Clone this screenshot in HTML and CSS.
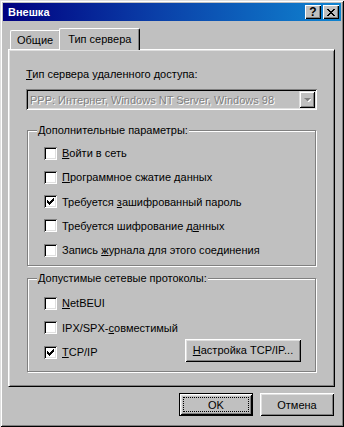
FILE: index.html
```html
<!DOCTYPE html>
<html lang="ru">
<head>
  <meta charset="UTF-8">
  <title>Внешка</title>
  <link rel="stylesheet" href="styles.css">
</head>
<body>
  <div class="window">
    <div class="titlebar">
      <span class="title">Внешка</span>
      <div class="title-buttons">
        <button class="tb-btn">?</button>
        <button class="tb-btn">
          <svg width="8" height="7" viewBox="0 0 8 7"><path d="M0 0h2v1h1v1h2v-1h1v-1h2v1h-1v1h-1v1h-1v1h1v1h1v1h1v1h-2v-1h-1v-1h-2v1h-1v1h-2v-1h1v-1h1v-1h1v-1h-1v-1h-1v-1h-1z" fill="#000"/></svg>
        </button>
      </div>
    </div>

    <div class="dialog-body">
      <div class="tabs">
        <div class="tab">Общие</div>
        <div class="tab active">Тип сервера</div>
      </div>

      <div class="panel">
        <div class="field-label"><u>Т</u>ип сервера удаленного доступа:</div>
        <div class="combo">
          <span class="combo-text">PPP: Интернет, Windows NT Server, Windows 98</span>
          <span class="combo-btn">
            <svg width="7" height="4" viewBox="0 0 7 4"><path d="M1 1h7l-3.5 3.5z" fill="#fff"/><path d="M0 0h7l-3.5 3.5z" fill="#808080"/></svg>
          </span>
        </div>

        <div class="group first">
          <span class="group-title">Дополнительные параметры:</span>
          <div class="options">
            <label class="option"><span class="check"></span><span><u>В</u>ойти в сеть</span></label>
            <label class="option"><span class="check"></span><span><u>П</u>рограммное сжатие данных</span></label>
            <label class="option"><span class="check checked"><svg width="7" height="7" viewBox="0 0 7 7"><path d="M0 2h1v1h1v1h1v-1h1v-1h1v-1h1v-1h1v3h-1v1h-1v1h-1v1h-1v1h-1v-1h-1v-1h-1z" fill="#000"/></svg></span><span>Требуется <u>з</u>ашифрованный пароль</span></label>
            <label class="option"><span class="check"></span><span>Требуется шифрование д<u>а</u>нных</span></label>
            <label class="option"><span class="check"></span><span>Запись <u>ж</u>урнала для этого соединения</span></label>
          </div>
        </div>

        <div class="group second">
          <span class="group-title">Допустимые сетевые протоколы:</span>
          <div class="options">
            <label class="option"><span class="check"></span><span><u>N</u>etBEUI</span></label>
            <label class="option"><span class="check"></span><span>IPX/SPX-<u>с</u>овместимый</span></label>
            <div class="option-row">
              <label class="option"><span class="check checked"><svg width="7" height="7" viewBox="0 0 7 7"><path d="M0 2h1v1h1v1h1v-1h1v-1h1v-1h1v-1h1v3h-1v1h-1v1h-1v1h-1v1h-1v-1h-1v-1h-1z" fill="#000"/></svg></span><span><u>T</u>CP/IP</span></label>
              <button class="btn setup"><u>Н</u>астройка TCP/IP...</button>
            </div>
          </div>
        </div>
      </div>

      <div class="actions">
        <button class="btn default"><span class="focus">OK</span></button>
        <button class="btn">Отмена</button>
      </div>
    </div>
  </div>
</body>
</html>
```

FILE: styles.css
```css
body {
  margin: 0;
  background-color: #c0c0c0;
  font-family: "Liberation Sans", Arial, sans-serif;
  font-size: 11px;
  color: #000;
}

u {
  text-underline-offset: 1px;
}

.window {
  box-sizing: border-box;
  width: 344px;
  height: 427px;
  padding: 3px;
  background-color: #c0c0c0;
  box-shadow: inset 1px 1px 0 #dfdfdf, inset -1px -1px 0 #000,
    inset 2px 2px 0 #fff, inset -2px -2px 0 #808080;
  display: flex;
  flex-direction: column;
}

.titlebar {
  height: 18px;
  display: flex;
  align-items: center;
  justify-content: space-between;
  padding: 0 2px 0 5px;
  background: linear-gradient(90deg, #000080 0%, #0a3fa8 45%, #1084d0 100%);
}

.title {
  color: #fff;
  font-weight: bold;
  font-size: 11px;
}

.title-buttons {
  display: flex;
  gap: 2px;
}

.tb-btn {
  width: 16px;
  height: 14px;
  padding: 0;
  border: none;
  background-color: #c0c0c0;
  box-shadow: inset 1px 1px 0 #fff, inset -1px -1px 0 #000,
    inset -2px -2px 0 #808080;
  font-family: "Liberation Sans", Arial, sans-serif;
  font-weight: bold;
  font-size: 12px;
  line-height: 13px;
  display: flex;
  align-items: center;
  justify-content: center;
}

.dialog-body {
  flex: 1;
  padding: 7px 6px 0 5px;
  display: flex;
  flex-direction: column;
}

.tabs {
  display: flex;
  align-items: flex-end;
  height: 21px;
  padding-left: 2px;
}

.tab {
  box-sizing: border-box;
  height: 19px;
  padding: 2px 7px 0 6px;
  border-top: 1px solid #fff;
  border-left: 1px solid #fff;
  border-right: 1px solid #000;
  border-radius: 2px 2px 0 0;
  box-shadow: inset -1px 0 0 #808080;
  line-height: 14px;
}

.tab.active {
  position: relative;
  z-index: 1;
  height: 22px;
  margin: 0 -2px -1px -2px;
  padding: 3px 8px 0 8px;
  background-color: #c0c0c0;
}

.panel {
  box-sizing: border-box;
  height: 338px;
  padding: 0 17px;
  border-top: 1px solid #fff;
  border-left: 1px solid #fff;
  border-right: 1px solid #000;
  border-bottom: 1px solid #000;
  box-shadow: inset 1px 1px 0 #dfdfdf, inset -1px -1px 0 #808080;
}

.field-label {
  margin-top: 18px;
  line-height: 13px;
}

.combo {
  box-sizing: border-box;
  height: 21px;
  margin-top: 8px;
  display: flex;
  align-items: center;
  justify-content: space-between;
  padding: 2px 2px 2px 4px;
  box-shadow: inset 1px 1px 0 #808080, inset -1px -1px 0 #fff,
    inset 2px 2px 0 #000, inset -2px -2px 0 #dfdfdf;
}

.combo-text {
  color: #808080;
  text-shadow: 1px 1px 0 #fff;
}

.combo-btn {
  width: 16px;
  height: 17px;
  display: flex;
  align-items: center;
  justify-content: center;
  background-color: #c0c0c0;
  box-shadow: inset 1px 1px 0 #dfdfdf, inset -1px -1px 0 #000,
    inset 2px 2px 0 #fff, inset -2px -2px 0 #808080;
}

.group {
  box-sizing: border-box;
  margin: 0 1px;
  border: 1px solid #808080;
  box-shadow: 1px 1px 0 #fff, inset 1px 1px 0 #fff;
  padding: 0 14px 0 16px;
}

.group.first {
  margin-top: 20px;
  height: 136px;
}

.group.second {
  margin-top: 12px;
  height: 94px;
}

.group-title {
  display: block;
  width: fit-content;
  margin: -7px 0 0 -7px;
  padding: 0 1px;
  line-height: 13px;
  background-color: #c0c0c0;
}

.options {
  display: flex;
  flex-direction: column;
}

.first .options {
  padding-top: 4px;
}

.first .option {
  height: 24.25px;
}

.second .options {
  padding-top: 6px;
}

.option {
  height: 24.5px;
  display: flex;
  align-items: center;
  gap: 5px;
}

.option-row {
  display: flex;
  align-items: center;
  justify-content: space-between;
  height: 24.5px;
}

.check {
  box-sizing: border-box;
  width: 13px;
  height: 13px;
  background-color: #fff;
  box-shadow: inset 1px 1px 0 #808080, inset -1px -1px 0 #fff,
    inset 2px 2px 0 #000, inset -2px -2px 0 #dfdfdf;
  display: flex;
  align-items: center;
  justify-content: center;
}

.btn {
  box-sizing: border-box;
  height: 23px;
  padding: 0;
  border: none;
  background-color: #c0c0c0;
  box-shadow: inset 1px 1px 0 #fff, inset -1px -1px 0 #000,
    inset 2px 2px 0 #dfdfdf, inset -2px -2px 0 #808080;
  font-family: "Liberation Sans", Arial, sans-serif;
  font-size: 11px;
  color: #000;
}

.btn.setup {
  width: 116px;
  margin-top: -4px;
}

.actions {
  display: flex;
  justify-content: flex-end;
  gap: 7px;
  margin-top: 6px;
  padding-right: 1px;
}

.actions .btn {
  width: 74px;
}

.btn.default {
  box-shadow: inset 0 0 0 1px #000, inset 2px 2px 0 #fff, inset -2px -2px 0 #000,
    inset 3px 3px 0 #dfdfdf, inset -3px -3px 0 #808080;
  display: flex;
  align-items: center;
  justify-content: center;
}

.focus {
  box-sizing: border-box;
  width: 66px;
  height: 15px;
  border: 1px dotted #000;
  display: flex;
  align-items: center;
  justify-content: center;
}
```
